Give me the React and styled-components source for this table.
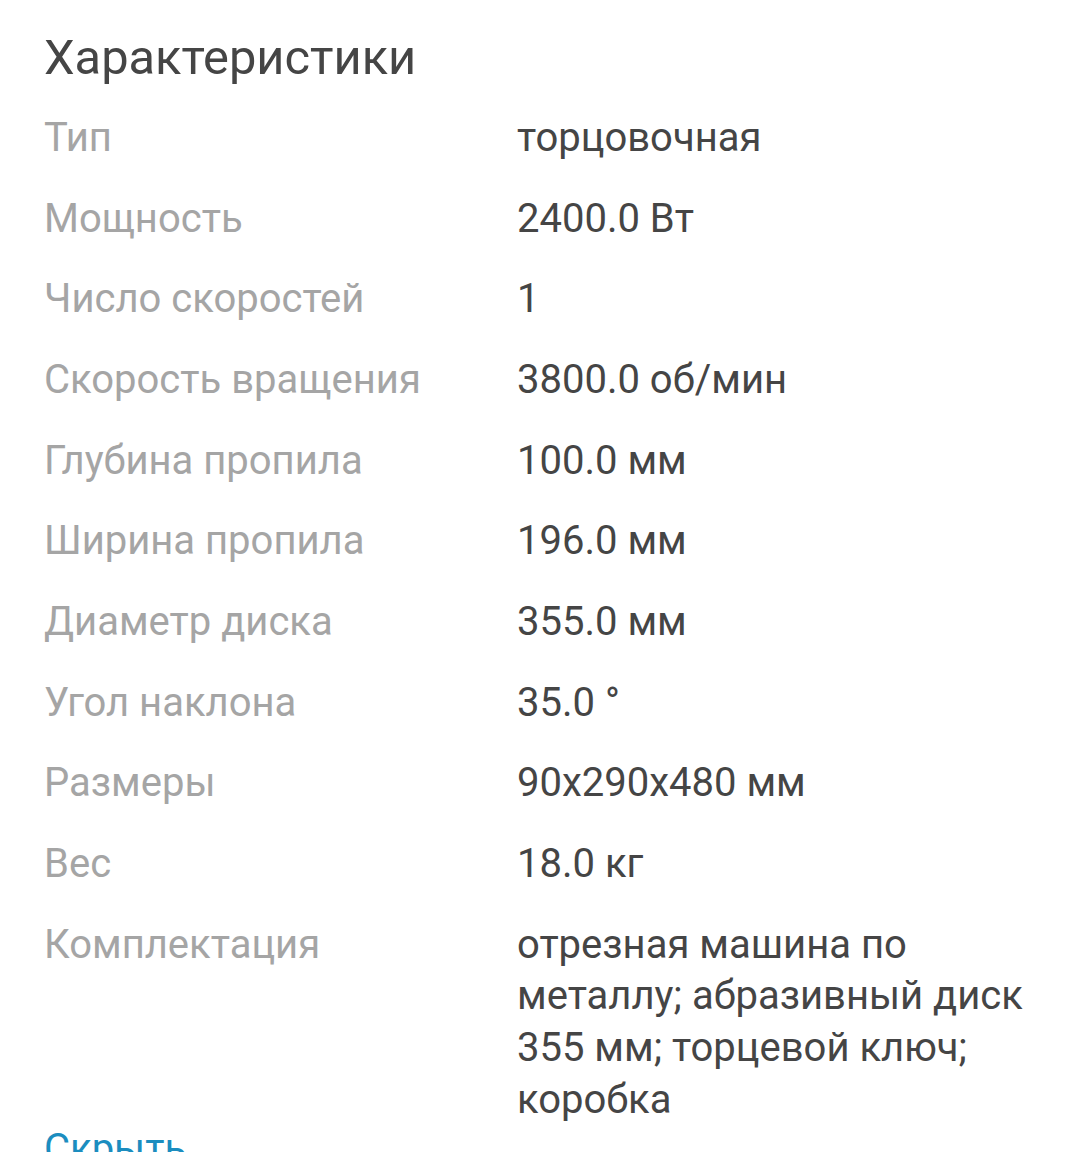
import React from "react";
import styled, { createGlobalStyle } from "styled-components";

const Global = createGlobalStyle`
  html, body { margin: 0; padding: 0; background: #fff; }
  body { font-family: Roboto, "Noto Sans", "Liberation Sans", sans-serif; }
`;

const Page = styled.div`
  padding: 30px 40px 0 44px;
  height: 1152px;
  box-sizing: border-box;
  overflow: hidden;
`;

const Title = styled.h2`
  margin: 0 0 26px;
  font-size: 48.8px;
  line-height: 56px;
  font-weight: 400;
  color: #454545;
`;

const Specs = styled.dl`
  display: grid;
  grid-template-columns: 473px 1fr;
  row-gap: 29px;
  margin: 0;
  font-size: 40px;
  line-height: 51.67px;
`;

const Label = styled.dt`
  margin: 0;
  color: #a5a5a5;
`;

const Value = styled.dd`
  margin: 0;
  color: #454545;
`;

const Toggle = styled.a`
  display: block;
  margin-top: -2px;
  font-size: 40px;
  line-height: 51.67px;
  color: #1b8dbf;
  text-decoration: none;
`;

const specs = [
  ["Тип", "торцовочная"],
  ["Мощность", "2400.0 Вт"],
  ["Число скоростей", "1"],
  ["Скорость вращения", "3800.0 об/мин"],
  ["Глубина пропила", "100.0 мм"],
  ["Ширина пропила", "196.0 мм"],
  ["Диаметр диска", "355.0 мм"],
  ["Угол наклона", "35.0 °"],
  ["Размеры", "90x290x480 мм"],
  ["Вес", "18.0 кг"],
  ["Комплектация", "отрезная машина по металлу; абразивный диск 355 мм; торцевой ключ; коробка"],
];

export default function App() {
  return (
    <>
      <Global />
      <Page>
        <Title>Характеристики</Title>
        <Specs>
          {specs.map(([k, v]) => (
            <React.Fragment key={k}>
              <Label>{k}</Label>
              <Value>{v}</Value>
            </React.Fragment>
          ))}
        </Specs>
        <Toggle href="#">Скрыть</Toggle>
      </Page>
    </>
  );
}
